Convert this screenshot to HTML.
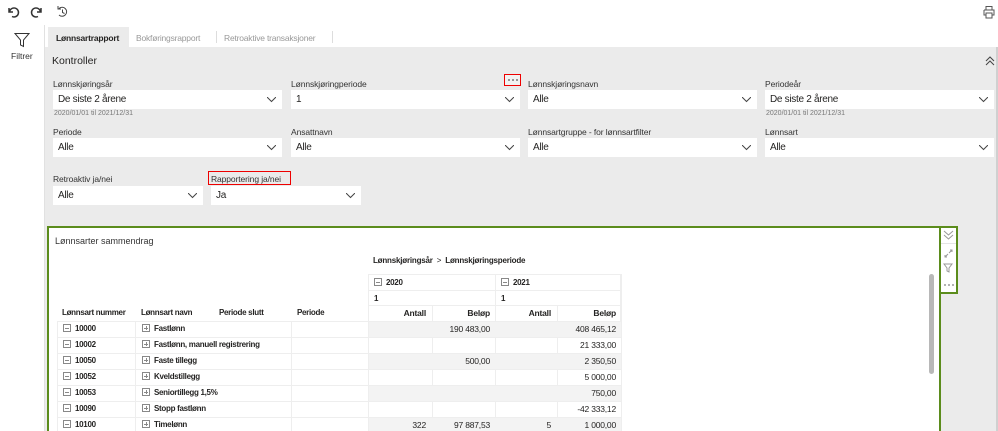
<!DOCTYPE html>
<html><head><meta charset="utf-8"><style>
*{margin:0;padding:0;box-sizing:border-box}
html{width:998px;height:431px;overflow:hidden}
body{width:998px;height:431px;overflow:hidden;background:#fff;font-family:"Liberation Sans",sans-serif;color:#252423;position:relative}
.a{position:absolute}
.lbl{position:absolute;font-size:8.5px;color:#333;letter-spacing:-0.1px}
.dd{position:absolute;background:#fff;height:19px;font-size:10px;letter-spacing:-0.3px;padding:4px 0 0 5px}
.dd svg{position:absolute;right:6px;top:7px}
.hint{position:absolute;font-size:7px;color:#777}
.cell{position:absolute;font-size:8px;font-weight:bold;letter-spacing:-0.3px;white-space:nowrap}
.num{position:absolute;font-size:8.5px;text-align:right;letter-spacing:-0.2px}
.box{display:inline-block;width:8px;height:8px;border:1px solid #888;position:relative;vertical-align:-1px;margin-right:4px}
.box:before{content:"";position:absolute;left:1px;right:1px;top:3px;height:1px;background:#888}
.plus:after{content:"";position:absolute;top:1px;bottom:1px;left:3px;width:1px;background:#888}
</style></head><body>
<svg class="a" style="left:6px;top:5px" width="14" height="14" viewBox="0 0 14 14"><path d="M3 3v4h4M3.5 7A4.5 4.5 0 1 1 6 11.5" fill="none" stroke="#333" stroke-width="1.5"/></svg>
<svg class="a" style="left:30px;top:5px" width="14" height="14" viewBox="0 0 14 14"><path d="M11 3v4H7M10.5 7A4.5 4.5 0 1 0 8 11.5" fill="none" stroke="#333" stroke-width="1.5"/></svg>
<svg class="a" style="left:56px;top:5px" width="13" height="14" viewBox="0 0 13 14"><path d="M3 3.5A4.5 4.5 0 1 1 3 10M2 1v3h3" fill="none" stroke="#444" stroke-width="1"/><path d="M6.5 4.5v3l2 1" fill="none" stroke="#444"/></svg>
<svg class="a" style="left:982px;top:5px" width="14" height="14" viewBox="0 0 14 14"><path d="M4 5V1.5h6V5M2 5h10v5h-2M4 10H2V5M4 8h6v5H4z" fill="none" stroke="#555"/></svg>
<div class="a" style="left:44px;top:25px;width:1px;height:406px;background:#e1e1e1"></div>
<svg class="a" style="left:14px;top:32px" width="16" height="16" viewBox="0 0 16 16"><path d="M1 1.5h14L9.5 8v6.5l-3-1.5V8z" fill="none" stroke="#333"/></svg>
<div class="a" style="left:11px;top:51px;font-size:8.5px;color:#333">Filtrer</div>
<div class="a" style="left:45px;top:47px;width:953px;height:384px;background:#ebebeb"></div>
<div class="a" style="left:48px;top:27px;width:81px;height:20px;background:#ebebeb;font-size:8.5px;letter-spacing:-0.2px;font-weight:bold;padding:6px 0 0 8px">Lønnsartrapport</div>
<div class="a" style="left:136px;top:33px;font-size:8.5px;color:#999;letter-spacing:-0.2px">Bokføringsrapport</div>
<div class="a" style="left:216px;top:31px;width:1px;height:12px;background:#ddd"></div>
<div class="a" style="left:224px;top:33px;font-size:8.5px;color:#999;letter-spacing:-0.2px">Retroaktive transaksjoner</div>
<div class="a" style="left:332px;top:31px;width:1px;height:12px;background:#ddd"></div>
<div class="a" style="left:52px;top:55px;font-size:10.5px">Kontroller</div>
<svg class="a" style="left:985px;top:56px" width="10" height="10" viewBox="0 0 10 10"><path d="M1 5l4-4 4 4M1 9l4-4 4 4" fill="none" stroke="#444"/></svg>
<div class="lbl" style="left:53px;top:79px">Lønnskjøringsår</div>
<div class="dd" style="left:53px;top:90px;width:229px">De siste 2 årene<svg width="9" height="6"><path d="M0 0l4.5 4.5L9 0" fill="none" stroke="#444"/></svg></div>
<div class="hint" style="left:54px;top:110px">2020/01/01 til 2021/12/31</div>
<div class="lbl" style="left:291px;top:79px">Lønnskjøringperiode</div>
<div class="dd" style="left:291px;top:90px;width:229px">1<svg width="9" height="6"><path d="M0 0l4.5 4.5L9 0" fill="none" stroke="#444"/></svg></div>
<div class="a" style="left:504px;top:74px;width:17px;height:12px;border:1.5px solid #e00;background:#f2f2f2"></div>
<div class="a" style="left:507px;top:79px;width:11px;height:2px;background:radial-gradient(circle,#777 0.8px,transparent 1px) 0 0/4px 2px repeat-x"></div>
<div class="lbl" style="left:528px;top:79px">Lønnskjøringsnavn</div>
<div class="dd" style="left:528px;top:90px;width:229px">Alle<svg width="9" height="6"><path d="M0 0l4.5 4.5L9 0" fill="none" stroke="#444"/></svg></div>
<div class="lbl" style="left:765px;top:79px">Periodeår</div>
<div class="dd" style="left:765px;top:90px;width:229px">De siste 2 årene<svg width="9" height="6"><path d="M0 0l4.5 4.5L9 0" fill="none" stroke="#444"/></svg></div>
<div class="hint" style="left:766px;top:110px">2020/01/01 til 2021/12/31</div>
<div class="lbl" style="left:53px;top:127px">Periode</div>
<div class="dd" style="left:53px;top:138px;width:229px">Alle<svg width="9" height="6"><path d="M0 0l4.5 4.5L9 0" fill="none" stroke="#444"/></svg></div>
<div class="lbl" style="left:291px;top:127px">Ansattnavn</div>
<div class="dd" style="left:291px;top:138px;width:229px">Alle<svg width="9" height="6"><path d="M0 0l4.5 4.5L9 0" fill="none" stroke="#444"/></svg></div>
<div class="lbl" style="left:528px;top:127px">Lønnsartgruppe - for lønnsartfilter</div>
<div class="dd" style="left:528px;top:138px;width:229px">Alle<svg width="9" height="6"><path d="M0 0l4.5 4.5L9 0" fill="none" stroke="#444"/></svg></div>
<div class="lbl" style="left:765px;top:127px">Lønnsart</div>
<div class="dd" style="left:765px;top:138px;width:229px">Alle<svg width="9" height="6"><path d="M0 0l4.5 4.5L9 0" fill="none" stroke="#444"/></svg></div>
<div class="lbl" style="left:53px;top:174px">Retroaktiv ja/nei</div>
<div class="dd" style="left:53px;top:186px;width:150px">Alle<svg width="9" height="6"><path d="M0 0l4.5 4.5L9 0" fill="none" stroke="#444"/></svg></div>
<div class="a" style="left:208px;top:171px;width:83px;height:14px;border:1.5px solid #e00"></div>
<div class="lbl" style="left:211px;top:174px">Rapportering ja/nei</div>
<div class="dd" style="left:211px;top:186px;width:150px">Ja<svg width="9" height="6"><path d="M0 0l4.5 4.5L9 0" fill="none" stroke="#444"/></svg></div>
<div class="a" style="left:47px;top:226px;width:894px;height:205px;background:#fff;border:2px solid #5b8c1c;border-bottom:none"></div>
<div class="a" style="left:939px;top:226px;width:19px;height:68px;background:#fff;border:2px solid #5b8c1c"></div>
<div class="a" style="left:941px;top:243px;width:15px;height:1px;background:#e5e5e5"></div>
<svg class="a" style="left:943px;top:230px" width="11" height="10" viewBox="0 0 11 10"><path d="M1 1l4.5 4 4.5-4M1 5l4.5 4 4.5-4" fill="none" stroke="#999"/></svg>
<svg class="a" style="left:944px;top:249px" width="9" height="9" viewBox="0 0 9 9"><path d="M5 4l3-3M6 1h2v2M4 5L1 8M1 6v2h2" fill="none" stroke="#999"/></svg>
<svg class="a" style="left:943px;top:263px" width="10" height="10" viewBox="0 0 10 10"><path d="M1 1h8L6 5v4L4 8V5z" fill="none" stroke="#999"/></svg>
<div class="a" style="left:943px;top:284px;width:11px;height:2px;background:radial-gradient(circle,#999 0.8px,transparent 1px) 0 0/4px 2px repeat-x"></div>
<div class="a" style="left:929px;top:274px;width:5px;height:100px;background:#b8b8b8;border-radius:3px"></div>
<div class="a" style="left:55px;top:236px;font-size:9px;color:#333">Lønnsarter sammendrag</div>
<div class="a" style="left:373px;top:256px;font-size:8px;letter-spacing:-0.2px;font-weight:bold">Lønnskjøringsår &nbsp;<span style="font-weight:normal">&gt;</span>&nbsp; Lønnskjøringsperiode</div>
<div class="a" style="left:368px;top:274px;width:253px;height:47px;border:1px solid #eee;border-bottom:none"></div>
<div class="a" style="left:368px;top:290px;width:253px;height:1px;background:#eee"></div>
<div class="a" style="left:368px;top:305px;width:253px;height:1px;background:#eee"></div>
<div class="a" style="left:495px;top:274px;width:1px;height:157px;background:#eee"></div>
<div class="a" style="left:432px;top:305px;width:1px;height:126px;background:#eee"></div>
<div class="a" style="left:557px;top:305px;width:1px;height:126px;background:#eee"></div>
<div class="cell" style="left:374px;top:278px"><span class="box"></span>2020</div>
<div class="cell" style="left:501px;top:278px"><span class="box"></span>2021</div>
<div class="cell" style="left:374px;top:294px">1</div>
<div class="cell" style="left:501px;top:294px">1</div>
<div class="cell" style="left:62px;top:308px">Lønnsart nummer</div>
<div class="cell" style="left:141px;top:308px">Lønnsart navn</div>
<div class="cell" style="left:219px;top:308px">Periode slutt</div>
<div class="cell" style="left:297px;top:308px">Periode</div>
<div class="num" style="left:368px;top:308px;width:58px;font-weight:bold">Antall</div>
<div class="num" style="left:432px;top:308px;width:58px;font-weight:bold">Beløp</div>
<div class="num" style="left:495px;top:308px;width:56px;font-weight:bold">Antall</div>
<div class="num" style="left:557px;top:308px;width:59px;font-weight:bold">Beløp</div>
<div class="a" style="left:368px;top:321px;width:253px;height:16px;background:#f3f3f3"></div>
<div class="a" style="left:368px;top:353px;width:253px;height:16px;background:#f3f3f3"></div>
<div class="a" style="left:368px;top:385px;width:253px;height:16px;background:#f3f3f3"></div>
<div class="a" style="left:368px;top:417px;width:253px;height:14px;background:#f3f3f3"></div>
<div class="a" style="left:57px;top:321px;width:564px;height:110px;border-top:1px solid #eee;background:repeating-linear-gradient(to bottom,transparent 0 15px,#eee 15px 16px)"></div>
<div class="a" style="left:57px;top:321px;width:1px;height:110px;background:#eee"></div>
<div class="a" style="left:135px;top:321px;width:1px;height:110px;background:#eee"></div>
<div class="a" style="left:291px;top:321px;width:1px;height:110px;background:#eee"></div>
<div class="a" style="left:368px;top:305px;width:1px;height:126px;background:#eee"></div>
<div class="a" style="left:621px;top:274px;width:1px;height:157px;background:#eee"></div>
<div class="cell" style="left:63px;top:324px"><span class="box"></span>10000</div><div class="cell" style="left:142px;top:324px"><span class="box plus"></span>Fastlønn</div>
<div class="cell" style="left:63px;top:340px"><span class="box"></span>10002</div><div class="cell" style="left:142px;top:340px"><span class="box plus"></span>Fastlønn, manuell registrering</div>
<div class="cell" style="left:63px;top:356px"><span class="box"></span>10050</div><div class="cell" style="left:142px;top:356px"><span class="box plus"></span>Faste tillegg</div>
<div class="cell" style="left:63px;top:372px"><span class="box"></span>10052</div><div class="cell" style="left:142px;top:372px"><span class="box plus"></span>Kveldstillegg</div>
<div class="cell" style="left:63px;top:388px"><span class="box"></span>10053</div><div class="cell" style="left:142px;top:388px"><span class="box plus"></span>Seniortillegg 1,5%</div>
<div class="cell" style="left:63px;top:404px"><span class="box"></span>10090</div><div class="cell" style="left:142px;top:404px"><span class="box plus"></span>Stopp fastlønn</div>
<div class="cell" style="left:63px;top:420px"><span class="box"></span>10100</div><div class="cell" style="left:142px;top:420px"><span class="box plus"></span>Timelønn</div>
<div class="num" style="left:432px;top:324px;width:58px">190 483,00</div>
<div class="num" style="left:557px;top:324px;width:59px">408 465,12</div>
<div class="num" style="left:557px;top:340px;width:59px">21 333,00</div>
<div class="num" style="left:432px;top:356px;width:58px">500,00</div>
<div class="num" style="left:557px;top:356px;width:59px">2 350,50</div>
<div class="num" style="left:557px;top:372px;width:59px">5 000,00</div>
<div class="num" style="left:557px;top:388px;width:59px">750,00</div>
<div class="num" style="left:557px;top:404px;width:59px">-42 333,12</div>
<div class="num" style="left:368px;top:420px;width:58px">322</div>
<div class="num" style="left:432px;top:420px;width:58px">97 887,53</div>
<div class="num" style="left:495px;top:420px;width:56px">5</div>
<div class="num" style="left:557px;top:420px;width:59px">1 000,00</div>
<div class="a" style="left:996px;top:47px;width:2px;height:384px;background:#d0d0d0"></div>
</body></html>
